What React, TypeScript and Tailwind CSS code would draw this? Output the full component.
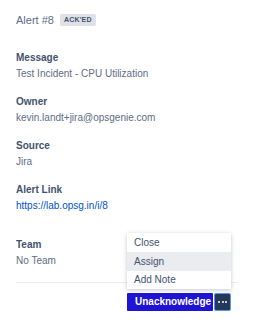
import React from "react";

function Field({ label, children, className = "" }: { label: string; children: React.ReactNode; className?: string }) {
  return (
    <div className={className}>
      <div className="h-4 leading-4 text-[10px] font-bold text-[#42526E]">{label}</div>
      <div className="h-4 leading-4 text-[10px] text-[#5E6C84]">{children}</div>
    </div>
  );
}

export default function App() {
  return (
    <div
      className="w-[254px] h-[330px] bg-white px-4 pt-[10px]"
      style={{ fontFamily: '"Liberation Sans", Arial, sans-serif' }}
    >
      <div className="flex items-center h-5">
        <span className="text-[11px] text-[#5E6C84]">Alert #8</span>
        <span className="ml-[6px] h-[12px] px-[4px] rounded-[2px] bg-[#DFE1E6] text-[#42526E] text-[7px] font-bold leading-[12px] tracking-[0.2px]">
          ACK'ED
        </span>
      </div>
      <Field label="Message" className="mt-5">Test Incident - CPU Utilization</Field>
      <Field label="Owner" className="mt-3">kevin.landt+jira@opsgenie.com</Field>
      <Field label="Source" className="mt-3">Jira</Field>
      <Field label="Alert Link" className="mt-3">
        <span className="text-[#0052CC]">https://lab.opsg.in/i/8</span>
      </Field>
      <Field label="Team" className="mt-[23px]">No Team</Field>
      <div className="mt-[13px] h-px bg-[#EBECF0]" />
      <div className="mt-[10px] flex justify-end pr-[7px]">
        <div className="relative flex gap-[1px]">
          <div className="absolute left-0 bottom-[22px] w-[104px] bg-white shadow-[0_1px_4px_rgba(9,30,66,0.25)]">
            <div className="h-[19px] leading-[19px] pl-[7px] text-[10px] text-[#42526E]">Close</div>
            <div className="h-[19px] leading-[19px] pl-[7px] text-[10px] text-[#42526E] bg-[#EBECF0]">Assign</div>
            <div className="h-[18px] leading-[18px] pl-[7px] text-[10px] text-[#42526E]">Add Note</div>
          </div>
          <div className="h-[18px] w-[86px] bg-[#1F14D4] text-white text-[10px] font-bold leading-[18px] pl-[8px] rounded-[1px] whitespace-nowrap">
            Unacknowledge
          </div>
          <div className="h-[18px] w-[17px] bg-[#253858] border border-[#4C9AFF] rounded-[2px] flex items-center justify-center gap-[1.5px]">
            <span className="w-[2px] h-[2px] bg-white rounded-full" />
            <span className="w-[2px] h-[2px] bg-white rounded-full" />
            <span className="w-[2px] h-[2px] bg-white rounded-full" />
          </div>
        </div>
      </div>
    </div>
  );
}
